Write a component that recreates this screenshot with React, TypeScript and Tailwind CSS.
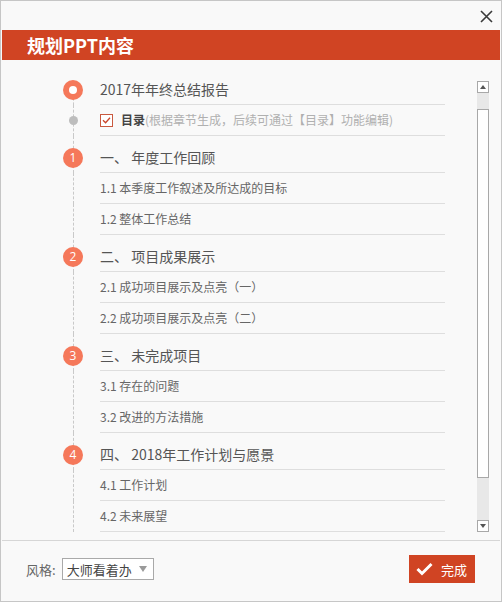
import React from "react";

type Row =
  | { kind: "title"; text: string }
  | { kind: "toc" }
  | { kind: "section"; num: number; text: string }
  | { kind: "sub"; text: string };

const rows: Row[] = [
  { kind: "title", text: "2017年年终总结报告" },
  { kind: "toc" },
  { kind: "section", num: 1, text: "一、 年度工作回顾" },
  { kind: "sub", text: "1.1 本季度工作叙述及所达成的目标" },
  { kind: "sub", text: "1.2 整体工作总结" },
  { kind: "section", num: 2, text: "二、 项目成果展示" },
  { kind: "sub", text: "2.1 成功项目展示及点亮（一）" },
  { kind: "sub", text: "2.2 成功项目展示及点亮（二）" },
  { kind: "section", num: 3, text: "三、 未完成项目" },
  { kind: "sub", text: "3.1 存在的问题" },
  { kind: "sub", text: "3.2 改进的方法措施" },
  { kind: "section", num: 4, text: "四、 2018年工作计划与愿景" },
  { kind: "sub", text: "4.1 工作计划" },
  { kind: "sub", text: "4.2 未来展望" },
];

const font = { fontFamily: '"Noto Sans CJK SC", "Noto Sans", sans-serif' };

function Timeline({ row, first }: { row: Row; first: boolean }) {
  return (
    <div className="w-[98px] shrink-0 flex">
      <div className="ml-[61px] w-[20px] relative">
        <div
          className={
            "absolute left-[10px] bottom-0 border-l border-dashed border-[#c9c9c9] " +
            (first ? "top-[30px]" : "top-0")
          }
        />
        {row.kind === "title" && (
          <div className="relative mt-[12px] w-[20px] h-[20px] rounded-full bg-[#f5785a] flex items-center justify-center">
            <div className="w-[8px] h-[8px] rounded-full bg-white" />
          </div>
        )}
        {row.kind === "section" && (
          <div
            className="relative mt-[12px] w-[20px] h-[20px] rounded-full bg-[#f5785a] flex items-center justify-center text-white text-[12px] leading-none"
            style={{ fontFamily: '"Open Sans", "Noto Sans", sans-serif' }}
          >
            {row.num}
          </div>
        )}
        {row.kind === "toc" && (
          <div className="relative mt-[11px] ml-[6px] w-[9px] h-[9px] rounded-full bg-[#bdbdbd]" />
        )}
      </div>
    </div>
  );
}

function RowView({ row, first }: { row: Row; first: boolean }) {
  const big = row.kind === "title" || row.kind === "section";
  return (
    <div className="flex">
      <Timeline row={row} first={first} />
      <div
        className={
          "w-[345px] border-b border-[#dedede] flex items-center " +
          (big ? "h-[37px] pt-[6px]" : "h-[31px]")
        }
      >
        {(row.kind === "title" || row.kind === "section") && (
          <span className="text-[14px] text-[#555] leading-none">{row.text}</span>
        )}
        {row.kind === "sub" && (
          <span className="text-[12px] text-[#666] leading-none">{row.text}</span>
        )}
        {row.kind === "toc" && (
          <div className="flex items-center">
            <div className="w-[13px] h-[13px] border border-[#c9593f] bg-white flex items-center justify-center">
              <svg width="9" height="9" viewBox="0 0 9 9">
                <path d="M1 4.2 L3.6 6.8 L8 1.8" fill="none" stroke="#c9452a" strokeWidth="1.3" />
              </svg>
            </div>
            <span className="ml-[8px] text-[12px] leading-none font-bold text-[#444]">目录</span>
            <span className="text-[12px] leading-none text-[#b0b0b0]">
              (根据章节生成，后续可通过【目录】功能编辑)
            </span>
          </div>
        )}
      </div>
    </div>
  );
}

function Scrollbar() {
  return (
    <div className="w-[12px] mt-[21px] mb-[8px] flex flex-col">
      <div className="h-[12px] border border-[#a8a8a8] bg-white flex items-center justify-center">
        <svg width="6" height="4" viewBox="0 0 6 4">
          <path d="M0 4 L3 0 L6 4 Z" fill="#555" />
        </svg>
      </div>
      <div className="flex-1 bg-[#e8e8e8] flex flex-col">
        <div className="h-[16px]" />
        <div className="h-[369px] border border-[#a8a8a8] bg-white" />
        <div className="flex-1" />
      </div>
      <div className="h-[12px] border border-[#a8a8a8] bg-white flex items-center justify-center">
        <svg width="6" height="4" viewBox="0 0 6 4">
          <path d="M0 0 L6 0 L3 4 Z" fill="#555" />
        </svg>
      </div>
    </div>
  );
}

export default function App() {
  return (
    <div
      className="w-[502px] h-[602px] border border-[#c6c6c6] bg-[#f9f9f9] flex flex-col overflow-hidden"
      style={font}
    >
      <div className="h-[29px] flex justify-end items-start pr-[8px] pt-[9px]">
        <svg width="13" height="13" viewBox="0 0 13 13">
          <path d="M1 1 L12 12 M12 1 L1 12" stroke="#3a3a3a" strokeWidth="1.6" />
        </svg>
      </div>
      <div className="mx-[1px] h-[30px] bg-[#d04423] flex items-center pl-[25px]">
        <span className="text-white font-bold text-[18px] leading-none">规划PPT内容</span>
      </div>
      <div className="h-[480px] flex pl-[1px]">
        <div className="pt-[8px] flex flex-col">
          {rows.map((r, i) => (
            <RowView key={i} row={r} first={i === 0} />
          ))}
        </div>
        <div className="w-[32px]" />
        <Scrollbar />
      </div>
      <div className="mx-[1px] border-t border-[#d6d6d6] flex-1 flex items-center justify-between pl-[24px] pr-[25px] pb-[4px]">
        <div className="flex items-center">
          <span className="text-[13px] text-[#666] leading-none">风格:</span>
          <div className="ml-[6px] w-[92px] h-[22px] border border-[#a9a9a9] bg-white flex items-center justify-between pl-[4px] pr-[6px]">
            <span className="text-[13px] text-[#444] leading-none">大师看着办</span>
            <svg width="8" height="6" viewBox="0 0 8 6">
              <path d="M0 0 L8 0 L4 6 Z" fill="#9a9a9a" />
            </svg>
          </div>
        </div>
        <div className="w-[66px] h-[28px] bg-[#d04423] flex items-center pl-[7px]">
          <svg width="17" height="14" viewBox="0 0 17 14">
            <path d="M1.5 7 L6 11.5 L15.5 2" fill="none" stroke="white" strokeWidth="3" />
          </svg>
          <span className="ml-[8px] text-[13px] text-white leading-none">完成</span>
        </div>
      </div>
    </div>
  );
}
